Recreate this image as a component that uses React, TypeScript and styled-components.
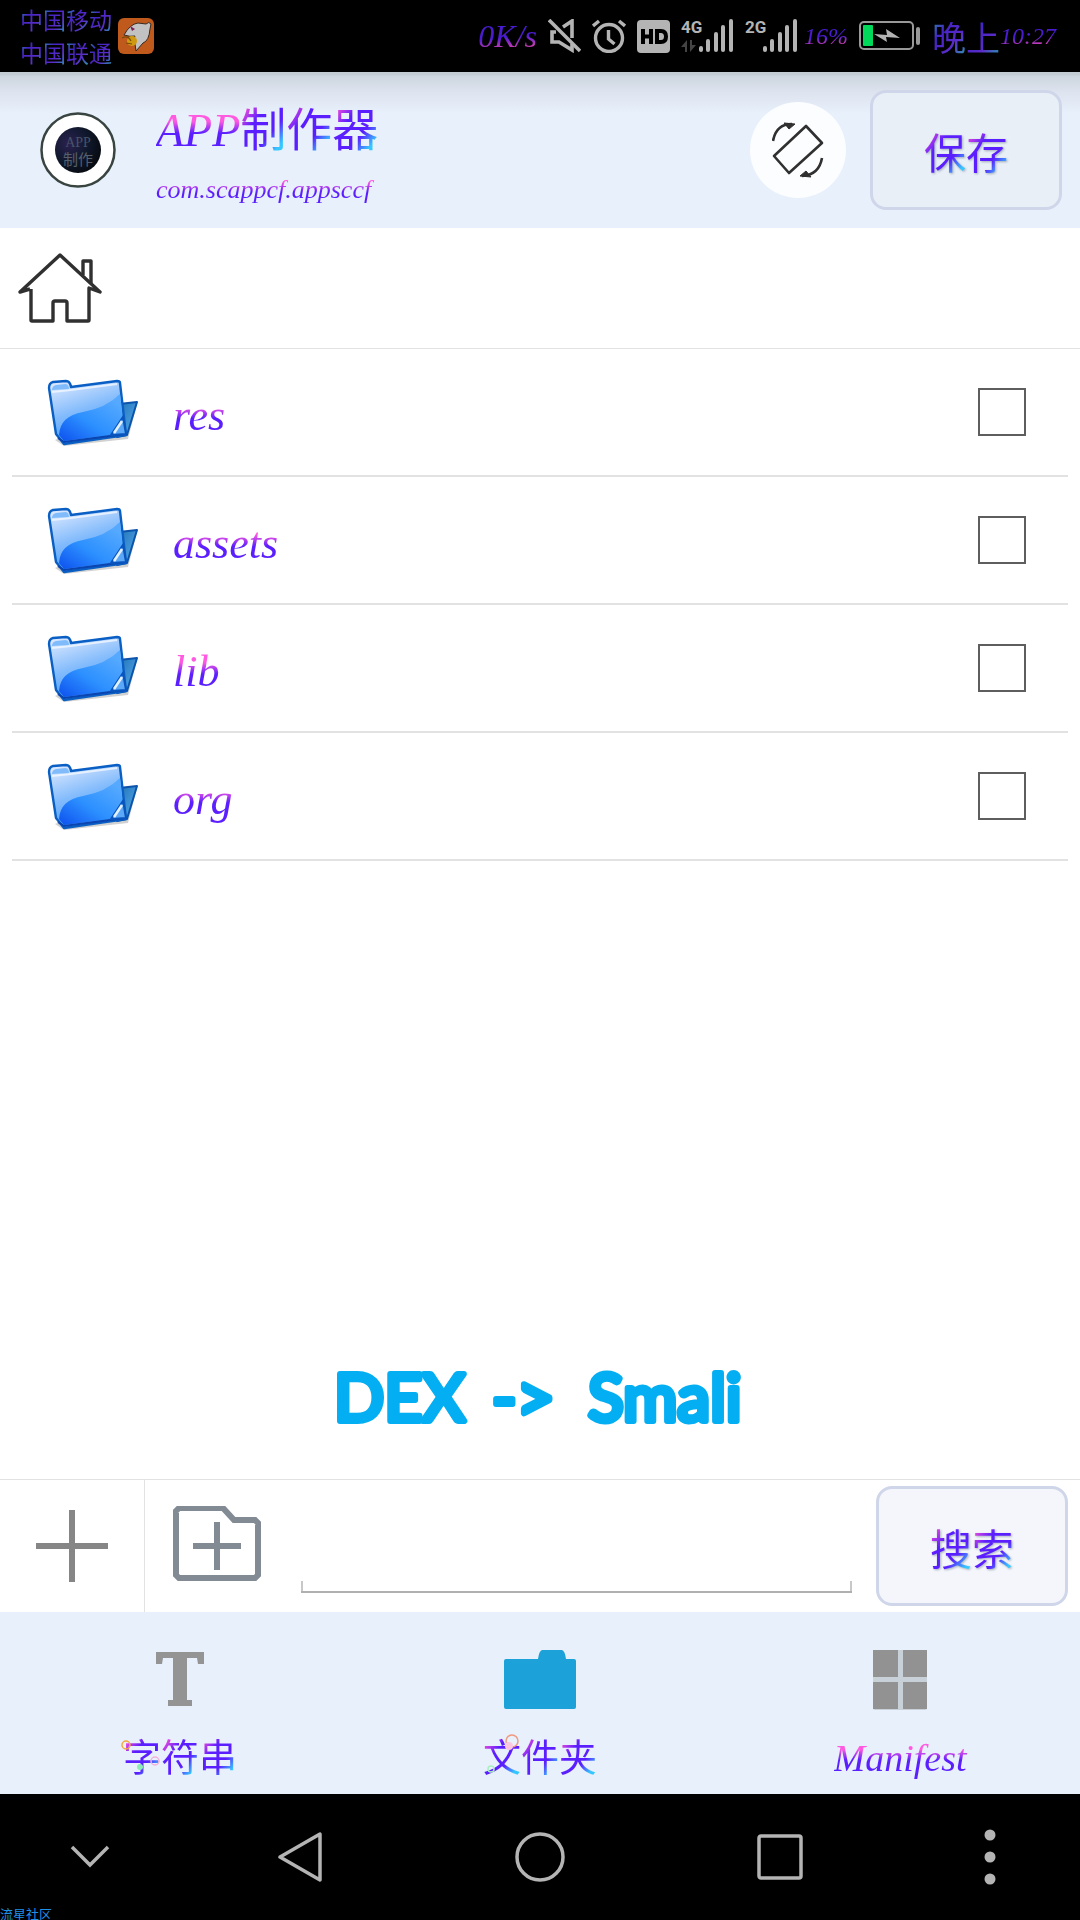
import React from 'react';
import styled, { createGlobalStyle, css } from 'styled-components';

const Global = createGlobalStyle`
  *, *::before, *::after { box-sizing: border-box; }
  body { margin: 0; background: #fff; font-family: "Liberation Serif", "Noto Sans CJK SC", serif; }
  button { font: inherit; border: 0; padding: 0; background: none; cursor: pointer; }
  svg { display: block; flex: none; }
`;

const Page = styled.div`
  min-height: 100vh;
  display: flex;
  flex-direction: column;
  background: #fff;
`;

const inkBase = css`
  color: transparent;
  background-clip: text;
  -webkit-background-clip: text;
  white-space: nowrap;
`;

const Latin = styled.span<{ $size: number; $dim?: boolean }>`
  ${inkBase}
  font-family: "Liberation Serif", serif;
  font-style: italic;
  font-size: ${p => p.$size}px;
  padding-right: 8px;
  margin-right: -8px;
  background-image: ${p => p.$dim
    ? 'linear-gradient(175deg, #4a1cd0 50%, #c43cb4 75%)'
    : 'linear-gradient(180deg, #ff5ae0 34%, #5a1eff 54%, #5a1eff 100%)'};
`;

const Han = styled.span<{ $size: number; $dim?: boolean }>`
  ${inkBase}
  font-family: "Noto Sans CJK SC", sans-serif;
  font-weight: 400;
  font-size: ${p => p.$size}px;
  background-image: ${p => p.$dim
    ? 'linear-gradient(130deg, #2c8fa8 10%, #4424c4 35%, #5a2cc8 65%, #2c8fb0 90%)'
    : 'linear-gradient(130deg, #ff50d8 14%, #5a1eff 38%, #5a1eff 64%, #35c8ff 84%)'};
  background-size: 1em 100%;
`;

const StatusBar = styled.header`
  height: 72px;
  display: flex;
  align-items: center;
  padding: 0 24px 0 20px;
  background: #000;
`;

const Carriers = styled.div`
  display: flex;
  flex-direction: column;
  margin-right: 6px;
  ${Han} { line-height: 33px; }
`;

const StatusRight = styled.div`
  margin-left: auto;
  display: flex;
  align-items: center;
  gap: 11px;
`;

const Power = styled.span`
  display: flex;
  align-items: center;
  gap: 11px;
  margin-left: -5px;
`;

const Clock = styled.span`
  display: flex;
  align-items: center;
`;

const Header = styled.div`
  height: 156px;
  display: flex;
  align-items: center;
  padding: 0 18px 0 40px;
  background: linear-gradient(#c3ccd3 0, #c3ccd3 3px, #cdd5de 4px, #dde4ef 20px, #e8f0fc 42px, #e8f0fc 100%);
`;

const AppNames = styled.div`
  display: flex;
  flex-direction: column;
  gap: 4px;
  margin-left: 40px;
  padding-top: 10px;
  flex: 1;
`;

const AppTitle = styled.h1`
  margin: 0;
  font-weight: 400;
  line-height: 60px;
  display: flex;
  align-items: baseline;
`;

const AppPackage = styled.div`
  line-height: 50px;
  display: flex;
`;

const RoundButton = styled.button`
  width: 96px;
  height: 96px;
  border-radius: 50%;
  background: #fcfdff;
  display: grid;
  place-items: center;
  margin-right: 24px;
`;

const BoxButton = styled.button<{ $tint: string }>`
  width: 192px;
  height: 120px;
  flex: none;
  border: 3px solid #d0d6ea;
  border-radius: 16px;
  background: ${p => p.$tint};
  ${Han} { filter: drop-shadow(1px 1px 1px rgba(70, 90, 110, 0.45)); }
`;

const PathBar = styled.nav`
  height: 121px;
  display: flex;
  align-items: center;
  padding-left: 18px;
  border-bottom: 1px solid #e2e2e2;
`;

const FileList = styled.ul`
  list-style: none;
  margin: 0;
  padding: 0 12px;
  flex: 1;
`;

const FileRow = styled.li`
  height: 128px;
  display: flex;
  align-items: center;
  padding: 0 42px 0 35px;
  border-bottom: 2px solid #e2e2e2;
`;

const FileName = styled.label`
  flex: 1;
  display: flex;
  margin-left: 34px;
  line-height: 60px;
  padding-top: 8px;
`;

const Check = styled.input`
  appearance: none;
  width: 48px;
  height: 48px;
  margin: 0;
  border: 2px solid #5e5e5e;
  background: #fff;
  &:checked { background: #5a1eff; }
`;

const Banner = styled.div`
  display: flex;
  justify-content: center;
  padding-bottom: 32px;
`;

const ToolBar = styled.form`
  height: 133px;
  display: flex;
  align-items: center;
  padding-right: 12px;
  border-top: 1px solid #e2e2e2;
`;

const AddFile = styled.button`
  width: 145px;
  align-self: stretch;
  display: grid;
  place-items: center;
  border-right: 1px solid #e2e2e2;
`;

const AddFolder = styled.button`
  width: 144px;
  align-self: stretch;
  display: grid;
  place-items: center;
`;

const FieldWrap = styled.div`
  flex: 1;
  height: 100%;
  display: flex;
  flex-direction: column;
  justify-content: flex-end;
  padding: 0 24px 19px 12px;
`;

const Field = styled.input`
  width: 100%;
  height: 80px;
  border: 0;
  outline: 0;
  padding: 0 12px;
  font-size: 38px;
  color: #5a1eff;
  background:
    linear-gradient(#b0b0b0, #b0b0b0) bottom / 100% 2px no-repeat,
    linear-gradient(#c8c8c8, #c8c8c8) left bottom / 2px 12px no-repeat,
    linear-gradient(#c8c8c8, #c8c8c8) right bottom / 2px 12px no-repeat;
`;

const Tabs = styled.nav`
  height: 182px;
  display: flex;
  background: #e8f0fc;
`;

const Tab = styled.button`
  flex: 1;
  display: flex;
  flex-direction: column;
  align-items: center;
  padding-top: 37px;
`;

const TabLabel = styled.span`
  position: relative;
  display: flex;
  margin-top: 20px;
  line-height: 48px;
  ${Latin} { line-height: 54px; }
`;

const Bubbles = styled.svg`
  position: absolute;
  left: -4px;
  top: 0;
`;

const NavBar = styled.footer`
  position: relative;
  height: 126px;
  display: flex;
  background: #000;
`;

const NavKey = styled.button<{ $grow: number }>`
  flex: ${p => p.$grow};
  display: grid;
  place-items: center;
`;

const Watermark = styled.span`
  position: absolute;
  left: 0;
  bottom: 0;
  font-family: "Noto Sans CJK SC", sans-serif;
  font-size: 13px;
  line-height: 13px;
  color: #1e90e6;
`;

const Signal = ({ label, arrows }: { label: string; arrows?: boolean }) => (
  <svg width="53" height="42" viewBox="0 -4 53 42" fill="#b4b4b4">
    <text x="0" y="14" fontFamily="Roboto, sans-serif" fontWeight="700" fontSize="17">{label}</text>
    {arrows && <path fill="#444" d="M0 28l6-7v12H4v-5zM9 21h2v5h4l-6 7z" />}
    <rect x="18" y="27" width="4" height="6" rx="2" />
    <rect x="25" y="20" width="4" height="13" rx="2" />
    <rect x="33" y="13" width="4" height="20" rx="2" />
    <rect x="40" y="6" width="4" height="27" rx="2" />
    <rect x="48" y="0" width="4" height="33" rx="2" />
  </svg>
);

const FolderIcon = () => (
  <svg width="92" height="72" viewBox="0 -4 92 72">
    <defs>
      <linearGradient id="front" x1="0.1" y1="0" x2="0.5" y2="1">
        <stop offset="0" stopColor="#dfeaff" /><stop offset="0.5" stopColor="#84bcfc" /><stop offset="1" stopColor="#3c98fb" />
      </linearGradient>
      <linearGradient id="wave" x1="0" y1="1" x2="0.8" y2="0.1">
        <stop offset="0" stopColor="#0d50ee" /><stop offset="0.5" stopColor="#2c90ff" /><stop offset="1" stopColor="#55a9ff" />
      </linearGradient>
      <linearGradient id="back" x1="0" y1="0" x2="1" y2="1">
        <stop offset="0" stopColor="#1d6fb4" /><stop offset="1" stopColor="#5ab0f0" />
      </linearGradient>
    </defs>
    <path d="M8 60l9 6 64-7 9-35z" fill="#000" opacity=".18" />
    <path d="M72 24l18-2-10 33-10 2z" fill="url(#back)" stroke="#0b54ac" strokeWidth="2" strokeLinejoin="round" />
    <path d="M2 8q0-5 4-6l13-1q4 0 5 6l46-6q3 0 3 2l6 52-62 9-8-10z" fill="url(#front)" stroke="#0a5fc4" strokeWidth="2.4" strokeLinejoin="round" />
    <path d="M5 12l19-2 46-6" fill="none" stroke="#f2f8ff" strokeWidth="2" opacity=".8" />
    <path d="M5 10q0-4 4-5l10-1q3 1 3 5z" fill="#80bcfb" />
    <path d="M12 55q1-19 24-23t37-18l4 39-60 8z" fill="url(#wave)" />
    <path d="M11 58l6 4 61-8" fill="none" stroke="#0a44b0" strokeWidth="2" />
    <path d="M64 55l12-18 3 17z" fill="#5ba8f8" stroke="#0a54bc" strokeWidth="2" />
    <path d="M67 53l8-12" stroke="#e4f1ff" strokeWidth="2.500" />
  </svg>
);

const folders = ['res', 'assets', 'lib', 'org'];

export default function App() {
  return (
    <Page>
      <Global />
      <StatusBar>
        <Carriers>
          <Han $size={23} $dim>中国移动</Han>
          <Han $size={23} $dim>中国联通</Han>
        </Carriers>
        <svg width="36" height="36" viewBox="0 0 36 36">
          <rect width="36" height="36" rx="6" fill="#c05a1c" />
          <path d="M6 17Q12 6 20 5l8 1q3-3 5 0l-1 5q-1 12-7 14l-7 8-1-7q-3-5 0-8-5 1-11-1z" fill="#c2c2c2" stroke="#3a2a20" strokeWidth="1" />
          <path d="M12 8l5 3-3 2z" fill="#7d1f50" />
          <circle cx="14" cy="23" r="5" fill="#d09a10" />
          <path d="M4 20q6-3 9 3M8 25l6 1" stroke="#7a4a08" strokeWidth="1.200" fill="none" />
        </svg>
        <StatusRight>
          <Latin $size={32} $dim>0K/s</Latin>
          <svg width="33" height="34" viewBox="0 0 33 34" fill="none" stroke="#b4b4b4" strokeWidth="3.600">
            <path d="M1 1l31 31" /><path d="M15 8l9-6v17" /><path d="M8 13H4v10h7l13 8v-6" />
          </svg>
          <svg width="34" height="34" viewBox="0 0 34 34" fill="none" stroke="#b4b4b4" strokeWidth="3.400">
            <circle cx="17" cy="19" r="13.500" /><path d="M16.500 11v9l6 5M1 7l6-5M27 2l6 5" />
          </svg>
          <svg width="33" height="33" viewBox="0 0 33 33">
            <rect width="33" height="33" rx="4" fill="#b4b4b4" />
            <path d="M6 9v15M6 16.500h8M14 9v15M20 11h4q5 0 5 5.500t-5 5.500h-4z" fill="none" stroke="#000" strokeWidth="4" />
          </svg>
          <Signal label="4G" arrows />
          <Signal label="2G" />
          <Power>
            <Latin $size={24} $dim>16%</Latin>
            <svg width="62" height="30" viewBox="0 0 62 30">
              <rect x="1" y="1" width="53" height="27" rx="4" fill="none" stroke="#999" strokeWidth="2" />
              <rect x="4" y="4" width="10" height="21" rx="1" fill="#00d95a" />
              <path d="M15 13l13 1-1-6 14 9-14-1 1 5z" fill="#b4b4b4" />
              <rect x="57" y="6" width="4" height="18" rx="2" fill="#999" />
            </svg>
          </Power>
          <Clock>
            <Han $size={34} $dim>晚上</Han>
            <Latin $size={24} $dim>10:27</Latin>
          </Clock>
        </StatusRight>
      </StatusBar>

      <Header>
        <svg width="76" height="76" viewBox="0 0 76 76">
          <defs>
            <radialGradient id="space" cx=".3" cy=".35" r=".8">
              <stop offset="0" stopColor="#2b2150" /><stop offset=".5" stopColor="#10192e" /><stop offset="1" stopColor="#05070a" />
            </radialGradient>
          </defs>
          <circle cx="38" cy="38" r="36.500" fill="#fff" stroke="#384440" strokeWidth="2.500" />
          <circle cx="38" cy="38" r="23" fill="url(#space)" />
          <text x="38" y="35" textAnchor="middle" fontFamily="Liberation Serif" fontSize="14" fill="#465468">APP</text>
          <text x="38" y="53" textAnchor="middle" fontFamily="Noto Sans CJK SC" fontSize="15" fill="#56606c">制作</text>
        </svg>
        <AppNames>
          <AppTitle><Latin $size={46}>APP</Latin><Han $size={46}>制作器</Han></AppTitle>
          <AppPackage><Latin $size={26}>com.scappcf.appsccf</Latin></AppPackage>
        </AppNames>
        <RoundButton aria-label="旋转">
          <svg width="52" height="56" viewBox="0 0 52 56" fill="none" stroke="#303030" strokeWidth="2.600" strokeLinejoin="round">
            <path d="M34 4l16 17-33 30L2 34z" />
            <path d="M1 19Q4 2 20 2M50 36Q47 53 30 54" />
            <path d="M12 1l11 1-6 5zM39 55l-11-1 6-5z" fill="#303030" strokeWidth="1" />
          </svg>
        </RoundButton>
        <BoxButton $tint="#e8eff7"><Han $size={42}>保存</Han></BoxButton>
      </Header>

      <PathBar>
        <svg width="84" height="70" viewBox="0 0 84 70" fill="none" stroke="#303030" strokeWidth="3.400" strokeLinejoin="round">
          <path d="M12 36L2 39 42 2l40 37-11-4v32q0 1-1 1H49V50q0-2-2-2H37q-2 0-2 2v18H14q-1 0-1-1V36" />
          <path d="M65 22V8h8v22" />
        </svg>
      </PathBar>

      <FileList>
        {folders.map(name => (
          <FileRow key={name}>
            <FolderIcon />
            <FileName htmlFor={`pick-${name}`}><Latin $size={44}>{name}</Latin></FileName>
            <Check type="checkbox" id={`pick-${name}`} />
          </FileRow>
        ))}
      </FileList>

      <Banner>
        <svg width="420" height="96" viewBox="-6 0 420 96" fontFamily="Lato, sans-serif" fontSize="66" fontWeight="400" fill="#04aef2" stroke="#04aef2" strokeWidth="6" strokeLinejoin="round" strokeLinecap="round">
          <text y="70"><tspan x="-2">DEX</tspan> <tspan x="156">-&gt;</tspan> <tspan x="252">Smali</tspan></text>
        </svg>
      </Banner>

      <ToolBar onSubmit={e => e.preventDefault()}>
        <AddFile type="button" aria-label="添加文件">
          <svg width="72" height="72" viewBox="0 0 72 72" stroke="#868686" strokeWidth="6"><path d="M0 36h72M36 0v72" /></svg>
        </AddFile>
        <AddFolder type="button" aria-label="添加文件夹">
          <svg width="88" height="80" viewBox="0 2 88 80" fill="none" stroke="#828a94" strokeWidth="6">
            <path d="M3 7l3-3h44l11 12h21l3 3v52l-3 3H6l-3-3zM20 42h48M44 18v48" />
          </svg>
        </AddFolder>
        <FieldWrap><Field type="text" aria-label="搜索" /></FieldWrap>
        <BoxButton $tint="#f4f6fb"><Han $size={42}>搜索</Han></BoxButton>
      </ToolBar>

      <Tabs>
        <Tab>
          <svg width="60" height="62" viewBox="0 0 60 62" fill="#949494"><path d="M6 3h48v12h-6l-1-6H37v42h5v6H18v-6h5V9H13l-1 6H6z" /></svg>
          <TabLabel>
            <Han $size={38}>字符串</Han>
            <Bubbles width="44" height="52" fill="none" strokeWidth="1.500">
              <circle cx="7" cy="14" r="4" stroke="#f2a83c" /><circle cx="36" cy="30" r="4" stroke="#f3b0d8" /><circle cx="21" cy="36" r="3" fill="#8cecb4" />
            </Bubbles>
          </TabLabel>
        </Tab>
        <Tab>
          <svg width="72" height="62" viewBox="0 0 72 62" fill="#1ca2d8"><path d="M2 10h32q1-8 4-9h20q3 1 4 9h8q2 0 2 2v46q0 2-2 2H2q-2 0-2-2V12q0-2 2-2z" /></svg>
          <TabLabel>
            <Han $size={38}>文件夹</Han>
            <Bubbles width="44" height="52" fill="none" strokeWidth="1.500">
              <circle cx="33" cy="10" r="6" stroke="#f09a80" /><circle cx="30" cy="15" r="4" fill="#fcc8e0" /><circle cx="12" cy="38" r="3" stroke="#a8f0c0" />
            </Bubbles>
          </TabLabel>
        </Tab>
        <Tab>
          <svg width="56" height="62" viewBox="0 0 56 62">
            <rect x="1" y="1" width="54" height="60" rx="2" fill="#c8d0d8" />
            <path d="M1 1h25v27H1zM31 1h24v27H31zM1 33h25v27H1zM31 33h24v27H31z" fill="#929292" />
          </svg>
          <TabLabel><Latin $size={38}>Manifest</Latin></TabLabel>
        </Tab>
      </Tabs>

      <NavBar>
        <NavKey $grow={3} aria-label="收起">
          <svg width="40" height="24" viewBox="0 0 40 24" fill="none" stroke="#b4b4b4" strokeWidth="3.500"><path d="M2 2l18 18L38 2" /></svg>
        </NavKey>
        <NavKey $grow={4} aria-label="返回">
          <svg width="44" height="50" viewBox="0 0 44 50" fill="none" stroke="#b4b4b4" strokeWidth="3.500" strokeLinejoin="round"><path d="M42 2v46L2 25z" /></svg>
        </NavKey>
        <NavKey $grow={4} aria-label="主页">
          <svg width="50" height="50" viewBox="0 0 50 50" fill="none" stroke="#b4b4b4" strokeWidth="3.500"><circle cx="25" cy="25" r="23" /></svg>
        </NavKey>
        <NavKey $grow={4} aria-label="最近">
          <svg width="46" height="46" viewBox="0 0 46 46" fill="none" stroke="#b4b4b4" strokeWidth="3.500"><rect x="2" y="2" width="42" height="42" rx="2" /></svg>
        </NavKey>
        <NavKey $grow={3} aria-label="更多">
          <svg width="12" height="56" viewBox="0 0 12 56" fill="#b4b4b4"><circle cx="6" cy="6" r="5.500" /><circle cx="6" cy="28" r="5.500" /><circle cx="6" cy="50" r="5.500" /></svg>
        </NavKey>
        <Watermark>流星社区</Watermark>
      </NavBar>
    </Page>
  );
}
